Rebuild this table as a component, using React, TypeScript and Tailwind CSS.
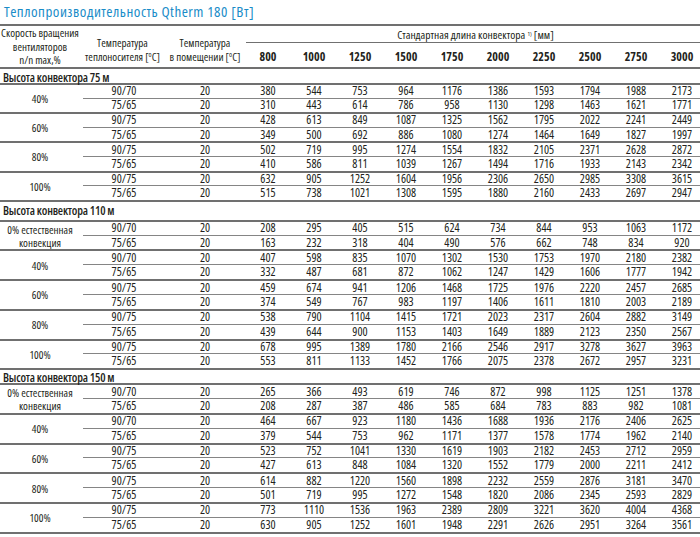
type Row = { temp: string; values: number[] };
type Pair = { speed: string[]; rows: [Row, Row] };
type Section = { title: string; headH: string; rowH: string; pairs: Pair[] };

const lengths = [800, 1000, 1250, 1500, 1750, 2000, 2250, 2500, 2750, 3000];

const sections: Section[] = [
  {
    title: "Высота конвектора 75 м",
    headH: "h-[16px] pt-[3px]",
    rowH: "h-[13.6px]",
    pairs: [
      {
        speed: ["40%"],
        rows: [
          { temp: "90/70", values: [380, 544, 753, 964, 1176, 1386, 1593, 1794, 1988, 2173] },
          { temp: "75/65", values: [310, 443, 614, 786, 958, 1130, 1298, 1463, 1621, 1771] },
        ],
      },
      {
        speed: ["60%"],
        rows: [
          { temp: "90/75", values: [428, 613, 849, 1087, 1325, 1562, 1795, 2022, 2241, 2449] },
          { temp: "75/65", values: [349, 500, 692, 886, 1080, 1274, 1464, 1649, 1827, 1997] },
        ],
      },
      {
        speed: ["80%"],
        rows: [
          { temp: "90/75", values: [502, 719, 995, 1274, 1554, 1832, 2105, 2371, 2628, 2872] },
          { temp: "75/65", values: [410, 586, 811, 1039, 1267, 1494, 1716, 1933, 2143, 2342] },
        ],
      },
      {
        speed: ["100%"],
        rows: [
          { temp: "90/75", values: [632, 905, 1252, 1604, 1956, 2306, 2650, 2985, 3308, 3615] },
          { temp: "75/65", values: [515, 738, 1021, 1308, 1595, 1880, 2160, 2433, 2697, 2947] },
        ],
      },
    ],
  },
  {
    title: "Высота конвектора 110 м",
    headH: "h-[20px] pt-[1px]",
    rowH: "h-[13.85px]",
    pairs: [
      {
        speed: ["0% естественная", "конвекция"],
        rows: [
          { temp: "90/70", values: [208, 295, 405, 515, 624, 734, 844, 953, 1063, 1172] },
          { temp: "75/65", values: [163, 232, 318, 404, 490, 576, 662, 748, 834, 920] },
        ],
      },
      {
        speed: ["40%"],
        rows: [
          { temp: "90/70", values: [407, 598, 835, 1070, 1302, 1530, 1753, 1970, 2180, 2382] },
          { temp: "75/65", values: [332, 487, 681, 872, 1062, 1247, 1429, 1606, 1777, 1942] },
        ],
      },
      {
        speed: ["60%"],
        rows: [
          { temp: "90/75", values: [459, 674, 941, 1206, 1468, 1725, 1976, 2220, 2457, 2685] },
          { temp: "75/65", values: [374, 549, 767, 983, 1197, 1406, 1611, 1810, 2003, 2189] },
        ],
      },
      {
        speed: ["80%"],
        rows: [
          { temp: "90/75", values: [538, 790, 1104, 1415, 1721, 2023, 2317, 2604, 2882, 3149] },
          { temp: "75/65", values: [439, 644, 900, 1153, 1403, 1649, 1889, 2123, 2350, 2567] },
        ],
      },
      {
        speed: ["100%"],
        rows: [
          { temp: "90/75", values: [678, 995, 1389, 1780, 2166, 2546, 2917, 3278, 3627, 3963] },
          { temp: "75/65", values: [553, 811, 1133, 1452, 1766, 2075, 2378, 2672, 2957, 3231] },
        ],
      },
    ],
  },
  {
    title: "Высота конвектора 150 м",
    headH: "h-[15px] pt-[2px]",
    rowH: "h-[13.85px]",
    pairs: [
      {
        speed: ["0% естественная", "конвекция"],
        rows: [
          { temp: "90/70", values: [265, 366, 493, 619, 746, 872, 998, 1125, 1251, 1378] },
          { temp: "75/65", values: [208, 287, 387, 486, 585, 684, 783, 883, 982, 1081] },
        ],
      },
      {
        speed: ["40%"],
        rows: [
          { temp: "90/70", values: [464, 667, 923, 1180, 1436, 1688, 1936, 2176, 2406, 2625] },
          { temp: "75/65", values: [379, 544, 753, 962, 1171, 1377, 1578, 1774, 1962, 2140] },
        ],
      },
      {
        speed: ["60%"],
        rows: [
          { temp: "90/75", values: [523, 752, 1041, 1330, 1619, 1903, 2182, 2453, 2712, 2959] },
          { temp: "75/65", values: [427, 613, 848, 1084, 1320, 1552, 1779, 2000, 2211, 2412] },
        ],
      },
      {
        speed: ["80%"],
        rows: [
          { temp: "90/75", values: [614, 882, 1220, 1560, 1898, 2232, 2559, 2876, 3181, 3470] },
          { temp: "75/65", values: [501, 719, 995, 1272, 1548, 1820, 2086, 2345, 2593, 2829] },
        ],
      },
      {
        speed: ["100%"],
        rows: [
          { temp: "90/75", values: [773, 1110, 1536, 1963, 2389, 2809, 3221, 3620, 4004, 4368] },
          { temp: "75/65", values: [630, 905, 1252, 1601, 1948, 2291, 2626, 2951, 3264, 3561] },
        ],
      },
    ],
  },
];

function DataRow({ row, height, divided }: { row: Row; height: string; divided: boolean }) {
  return (
    <div
      className={`grid grid-cols-[82px_80px_repeat(10,46px)] items-center ${height} ${
        divided ? "border-b border-[#858585]" : ""
      }`}
    >
      <span className="text-center">{row.temp}</span>
      <span className="text-center">20</span>
      {row.values.map((v, i) => (
        <span key={i} className="text-center">
          {v}
        </span>
      ))}
    </div>
  );
}

export default function App() {
  return (
    <div className="w-[700px] h-[537px] overflow-hidden bg-white">
      <div className="w-[705px] text-[12px] leading-none whitespace-nowrap text-[#231f20] font-['Open_Sans',sans-serif] font-stretch-condensed">
        {/* Title */}
        <div className="h-[24px] flex items-center pl-[4px] pb-[1px]">
          <h1 className="text-[15px] tracking-[0.5px] text-[#1a8cc8]">
            Теплопроизводительность Qtherm 180 [Вт]
          </h1>
        </div>

        {/* Column header */}
        <div className="grid grid-cols-[80px_85px_80px_460px] h-[45px] border-y-2 border-[#707070]">
          <div className="flex flex-col items-center justify-center text-[11px] leading-[13.5px] pb-[1px]">
            <span>Скорость вращения</span>
            <span>вентиляторов</span>
            <span>n/n max,%</span>
          </div>
          <div className="flex flex-col items-center justify-center text-[11px] leading-[14px] pt-[6px]">
            <span>Температура</span>
            <span>
              теплоносителя [<sup className="text-[7px]">o</sup>C]
            </span>
          </div>
          <div className="flex flex-col items-center justify-center text-[11px] leading-[14px] pt-[6px]">
            <span>Температура</span>
            <span>
              в помещении [<sup className="text-[7px]">o</sup>C]
            </span>
          </div>
          <div className="flex flex-col">
            <div className="h-[17px] flex items-center justify-center border-b border-[#707070] ml-[1px] pt-[1px] text-[11.5px]">
              <span>
                Стандартная длина конвектора <sup className="text-[6px]">1)</sup> [мм]
              </span>
            </div>
            <div className="flex-1 grid grid-cols-[repeat(10,46px)] items-center pt-[4px] font-bold">
              {lengths.map((l) => (
                <span key={l} className="text-center">
                  {l}
                </span>
              ))}
            </div>
          </div>
        </div>

        {sections.map((s) => (
          <div key={s.title}>
            <div
              className={`${s.headH} flex items-center pl-[3px] font-semibold tracking-[-0.2px] border-b-2 border-[#707070]`}
            >
              {s.title}
            </div>
            {s.pairs.map((p, pi) => (
              <div key={pi} className="grid grid-cols-[80px_1fr] border-b-2 border-[#707070]">
                <div className="flex flex-col items-center justify-center text-[11px] leading-[13px]">
                  {p.speed.map((t) => (
                    <span key={t}>{t}</span>
                  ))}
                </div>
                <div className="pl-[3px]">
                  <DataRow row={p.rows[0]} height={s.rowH} divided />
                  <DataRow row={p.rows[1]} height={s.rowH} divided={false} />
                </div>
              </div>
            ))}
          </div>
        ))}
      </div>
    </div>
  );
}
